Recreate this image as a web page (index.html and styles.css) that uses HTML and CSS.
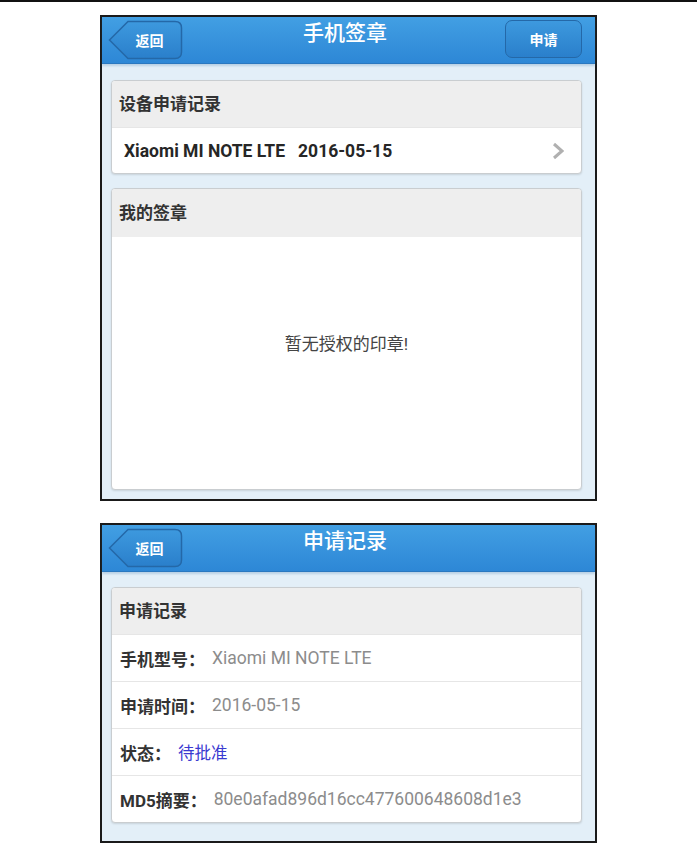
FILE: index.html
```html
<!DOCTYPE html>
<html lang="zh-CN">
<head>
  <meta charset="UTF-8">
  <meta name="viewport" content="width=device-width, initial-scale=1.0">
  <title>手机签章</title>
  <link rel="stylesheet" href="styles.css">
</head>
<body>
  <div class="topline"></div>

  <div class="shot shot-main">
    <div class="navbar">
      <a class="btn-back" href="#">
        <svg class="btn-shape" viewBox="0 0 75 40" preserveAspectRatio="none">
          <defs>
            <linearGradient id="backFill1" x1="0" y1="0" x2="0" y2="1">
              <stop offset="0" stop-color="#3d99de"/>
              <stop offset="1" stop-color="#2a7fcb"/>
            </linearGradient>
          </defs>
          <path d="M20 1.5 H67 Q73.5 1.5 73.5 8 V32 Q73.5 38.5 67 38.5 H20 L1.5 20 Z" fill="url(#backFill1)" stroke="#2468a8" stroke-width="1.5"/>
        </svg>
        <span>返回</span>
      </a>
      <h1 class="nav-title">手机签章</h1>
      <a class="btn-apply" href="#">申请</a>
    </div>
    <div class="content">
      <div class="card">
        <div class="card-head">设备申请记录</div>
        <a class="card-row link-row" href="#">
          <span>Xiaomi MI NOTE LTE&nbsp;&nbsp;&nbsp;2016-05-15</span>
          <svg class="chevron" viewBox="0 0 14 18">
            <path d="M3 2 L11 9 L3 16" fill="none" stroke="#b0b0b0" stroke-width="3"/>
          </svg>
        </a>
      </div>
      <div class="card card-seals">
        <div class="card-head">我的签章</div>
        <div class="empty">暂无授权的印章!</div>
      </div>
    </div>
  </div>

  <div class="shot shot-detail">
    <div class="navbar">
      <a class="btn-back" href="#">
        <svg class="btn-shape" viewBox="0 0 75 40" preserveAspectRatio="none">
          <defs>
            <linearGradient id="backFill2" x1="0" y1="0" x2="0" y2="1">
              <stop offset="0" stop-color="#3d99de"/>
              <stop offset="1" stop-color="#2a7fcb"/>
            </linearGradient>
          </defs>
          <path d="M20 1.5 H67 Q73.5 1.5 73.5 8 V32 Q73.5 38.5 67 38.5 H20 L1.5 20 Z" fill="url(#backFill2)" stroke="#2468a8" stroke-width="1.5"/>
        </svg>
        <span>返回</span>
      </a>
      <h1 class="nav-title">申请记录</h1>
      <div></div>
    </div>
    <div class="content">
      <div class="card">
        <div class="card-head">申请记录</div>
        <div class="card-row"><b>手机型号：</b><span class="value">Xiaomi MI NOTE LTE</span></div>
        <div class="card-row"><b>申请时间：</b><span class="value">2016-05-15</span></div>
        <div class="card-row"><b>状态：</b><span class="value pending">待批准</span></div>
        <div class="card-row"><b>MD5摘要：</b><span class="value">80e0afad896d16cc477600648608d1e3</span></div>
      </div>
    </div>
  </div>
</body>
</html>
```

FILE: styles.css
```css
body {
  margin: 0;
  background-color: #fff;
  font-family: Roboto, "Noto Sans CJK SC", sans-serif;
  color: #333;
}
a {
  text-decoration: none;
  color: inherit;
}
.topline {
  height: 2px;
  background-color: #111;
}
.shot {
  width: 493px;
  margin: 13px auto 0;
  border: 2px solid #1a1a1a;
  background-color: #e3eff8;
}
.shot-detail {
  margin-top: 22px;
}
.navbar {
  display: grid;
  grid-template-columns: 1fr auto 1fr;
  align-items: start;
  height: 47px;
  padding: 3px 13px 0 6px;
  box-sizing: border-box;
  background: linear-gradient(#429fe3, #2d87d6);
  border-bottom: 1px solid #2a78c0;
  box-shadow: 0 2px 2px rgba(60, 120, 170, 0.25);
}
.btn-back {
  position: relative;
  width: 75px;
  height: 40px;
  display: flex;
  align-items: center;
  justify-content: center;
  padding-left: 8px;
  box-sizing: border-box;
}
.btn-shape {
  position: absolute;
  left: 0;
  top: 0;
  width: 100%;
  height: 100%;
}
.btn-back span {
  position: relative;
  color: #fff;
  font-size: 14px;
  font-weight: bold;
}
.nav-title {
  margin: 0;
  color: #fff;
  font-size: 21px;
  font-weight: 500;
  line-height: 26px;
}
.btn-apply {
  justify-self: end;
  width: 77px;
  height: 38px;
  box-sizing: border-box;
  display: flex;
  align-items: center;
  justify-content: center;
  color: #fff;
  font-size: 14px;
  font-weight: bold;
  border: 1.5px solid #2468a8;
  border-radius: 7px;
  background: linear-gradient(#3d99de, #2a7fcb);
}
.content {
  padding: 16px 13px 9px 9px;
  display: flex;
  flex-direction: column;
  gap: 14px;
}
.shot-detail .content {
  padding: 15px 13px 18px 9px;
}
.card {
  background-color: #fff;
  border: 1px solid #c9cdd0;
  border-radius: 4px;
  box-shadow: 0 1px 2px rgba(0, 0, 0, 0.12);
  overflow: hidden;
}
.card-head {
  height: 46px;
  line-height: 46px;
  padding-left: 7px;
  background-color: #eeeeee;
  font-size: 17px;
  font-weight: bold;
  color: #333;
}
.card-row {
  display: flex;
  align-items: center;
  height: 46px;
  box-sizing: border-box;
  padding-left: 8px;
  border-top: 1px solid #e6e6e6;
  font-size: 17px;
}
.shot-detail .card-row {
  height: 47px;
}
.card-row b {
  color: #333;
  margin-right: 7px;
}
.link-row {
  justify-content: space-between;
  padding: 0 16px 0 12px;
  font-size: 17.5px;
  font-weight: bold;
  color: #262626;
}
.chevron {
  width: 14px;
  height: 18px;
}
.value {
  color: #8c8c8c;
  font-size: 17.5px;
}
.value.pending {
  color: #3a3ad0;
  font-size: 16.5px;
}
.card-seals .card-head {
  height: 48px;
  line-height: 48px;
}
.empty {
  height: 252px;
  box-sizing: border-box;
  padding-top: 93px;
  text-align: center;
  font-size: 17px;
  color: #444;
}
```
